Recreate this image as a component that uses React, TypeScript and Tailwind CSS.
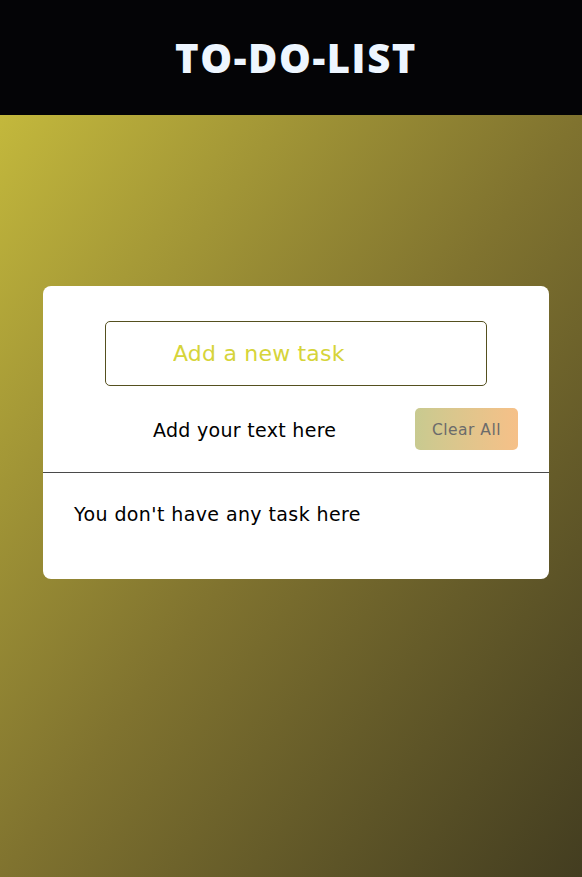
import React from "react";

export default function App() {
  return (
    <div className="min-h-[877px] w-full flex flex-col font-['DejaVu_Sans',sans-serif]">
      <header className="h-[115px] bg-[#040406] flex items-center justify-center pl-[10px]">
        <h1 className="font-['Open_Sans',sans-serif] text-[40px] font-extrabold text-[#eef6ff] tracking-[1.6px] leading-none">TO-DO-LIST</h1>
      </header>
      <main className="flex-1 bg-linear-to-br from-[#c3b83c] via-[#80732f] to-[#433d20] px-[43px] pt-[171px] pb-[298px]">
        <div className="bg-white rounded-[8px] w-[506px] h-[293px] flex flex-col">
          <div className="flex justify-center pt-[35px]">
            <input
              className="w-[382px] h-[65px] border border-[#55501f] rounded-[5px] pl-[67px] text-[22px] tracking-[0.2px] text-[#d6d43a] placeholder:text-[#d6d43a] outline-none"
              placeholder="Add a new task"
            />
          </div>
          <div className="flex items-center h-[42px] mt-[22px]">
            <span className="ml-[110px] pt-[2px] text-[19px] tracking-[0.3px] text-black">Add your text here</span>
            <button className="ml-auto mr-[31px] w-[103px] h-[42px] pt-[3px] rounded-[5px] bg-linear-to-r from-[#c8ca90] to-[#f6c088] text-[15.5px] text-[#6b6b6b] tracking-[0.5px]">
              Clear All
            </button>
          </div>
          <div className="mt-[22px] border-t border-[#4a4a4a]" />
          <div className="pl-[31px] pt-[27px] text-[19px] tracking-[0.4px] text-black">You don't have any task here</div>
        </div>
      </main>
    </div>
  );
}
